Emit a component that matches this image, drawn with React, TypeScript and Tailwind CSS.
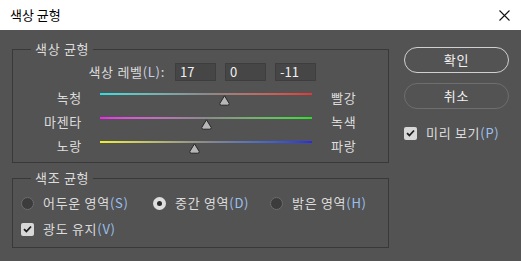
const sliders = [
  { id: 1, left: "녹청", right: "빨강", value: 17, grad: "from-[#22e0e0] via-[#8a8a8a] to-[#e23636]" },
  { id: 2, left: "마젠타", right: "녹색", value: 0, grad: "from-[#f020f0] via-[#8a8a8a] to-[#22e022]" },
  { id: 3, left: "노랑", right: "파랑", value: -11, grad: "from-[#f0f020] via-[#8a8a8a] to-[#2828f0]" },
];

const tones = [
  { id: "s", name: "어두운 영역", key: "S", width: "w-[132px]", checked: false },
  { id: "d", name: "중간 영역", key: "D", width: "w-[117px]", checked: true },
  { id: "h", name: "밝은 영역", key: "H", width: "w-[100px]", checked: false },
];

const Key = ({ k }: { k: string }) => <span className="text-[#9cc0f0]">({k})</span>;

const Check = () => (
  <span className="flex h-[13px] w-[13px] shrink-0 items-center justify-center rounded-[2px] bg-[#d8d8d8]">
    <svg width="9" height="8" viewBox="0 0 9 8">
      <path d="M1 4.2 L3.4 6.5 L8 1.5" fill="none" stroke="#1e1e1e" strokeWidth="1.8" />
    </svg>
  </span>
);

const Thumb = ({ value }: { value: number }) => (
  <svg
    className="absolute top-[2px]"
    style={{ left: ((value + 100) / 200) * 212 - 5.5 }}
    width="11"
    height="11"
    viewBox="0 0 11 11"
  >
    <path
      d="M5.5 0.8 L10.2 8.4 Q10.4 10.2 8.8 10.2 L2.2 10.2 Q0.6 10.2 0.8 8.4 Z"
      fill="#b6b6b6"
      stroke="#262626"
      strokeWidth="1"
      strokeLinejoin="round"
    />
  </svg>
);

const App = () => {
  return (
    <div className="h-[261px] w-[521px] overflow-hidden bg-[#535353] font-['Noto_Sans_CJK_KR','Liberation_Sans',sans-serif] text-[13px] text-[#dcdcdc]">
      {/* Title bar */}
      <div className="flex h-[30px] items-center justify-between bg-white pl-[10px] pr-[11px] text-black">
        <span className="leading-[16px]">색상 균형</span>
        <svg width="11" height="11" viewBox="0 0 11 11">
          <path d="M0.5 0.5 L10.5 10.5 M10.5 0.5 L0.5 10.5" stroke="#111" strokeWidth="1.1" />
        </svg>
      </div>

      <div className="flex pl-[12px] pt-[11px] tracking-[0.7px]">
        {/* Left column */}
        <div className="w-[377px]">
          <fieldset className="border border-[#393939] pb-[4px]">
            <legend className="ml-[18px] px-[4px] leading-[16px]">색상 균형</legend>
            <div className="mt-[6px] flex h-[18px] items-center">
              <span className="w-[152px] text-right leading-[18px]">
                색상 레벨<span className="text-[#c8d2e4]">(L)</span>:
              </span>
              <div className="ml-[10px] flex gap-[9px]">
                {sliders.map((s) => (
                  <div
                    key={s.id}
                    className="h-[18px] w-[41px] border border-[#3e3e3e] bg-[#464646] pl-[4px] leading-[16px] tracking-normal text-[#f0f0f0]"
                  >
                    {s.value}
                  </div>
                ))}
              </div>
            </div>
            <div className="mt-[5px]">
              {sliders.map((s) => (
                <div key={s.id} className="flex h-[24px] items-start">
                  <span className="w-[69px] text-right leading-[24px]">{s.left}</span>
                  <div className={`relative ml-[18px] mt-[7px] h-[2px] w-[212px] bg-linear-to-r ${s.grad}`}>
                    <Thumb value={s.value} />
                  </div>
                  <span className="ml-[19px] leading-[24px]">{s.right}</span>
                </div>
              ))}
            </div>
          </fieldset>

          <fieldset className="mt-[7px] border border-[#393939] pb-[7px]">
            <legend className="ml-[18px] px-[4px] leading-[16px]">색조 균형</legend>
            <div className="mt-[6px] flex h-[22px] items-center pl-[8px]">
              {tones.map((t) => (
                <div key={t.id} className={`flex items-center ${t.width}`}>
                  {t.checked ? (
                    <span className="flex h-[13px] w-[13px] items-center justify-center rounded-full bg-[#dedede]">
                      <span className="h-[5px] w-[5px] rounded-full bg-[#2a2a2a]" />
                    </span>
                  ) : (
                    <span className="h-[13px] w-[13px] rounded-full border border-[#6c6c6c] bg-[#3c3c3c]" />
                  )}
                  <span className="ml-[9px] whitespace-nowrap leading-[22px]">
                    {t.name}
                    <Key k={t.key} />
                  </span>
                </div>
              ))}
            </div>
            <div className="mt-[4px] flex h-[22px] items-center pl-[8px]">
              <Check />
              <span className="ml-[9px] leading-[22px]">
                광도 유지<Key k="V" />
              </span>
            </div>
          </fieldset>
        </div>

        {/* Right column */}
        <div className="ml-[15px] mt-[6px] w-[105px]">
          <button className="flex h-[26px] w-[105px] items-center justify-center rounded-full border-[1.5px] border-[#d0d0d0] text-[#f2f2f2]">
            확인
          </button>
          <button className="mt-[10px] flex h-[26px] w-[105px] items-center justify-center rounded-full border-[1.5px] border-[#6e6e6e] text-[#f2f2f2]">
            취소
          </button>
          <div className="mt-[17px] flex h-[14px] items-center">
            <Check />
            <span className="ml-[9px] whitespace-nowrap leading-[14px]">
              미리 보기<Key k="P" />
            </span>
          </div>
        </div>
      </div>
    </div>
  );
};

export default App;
